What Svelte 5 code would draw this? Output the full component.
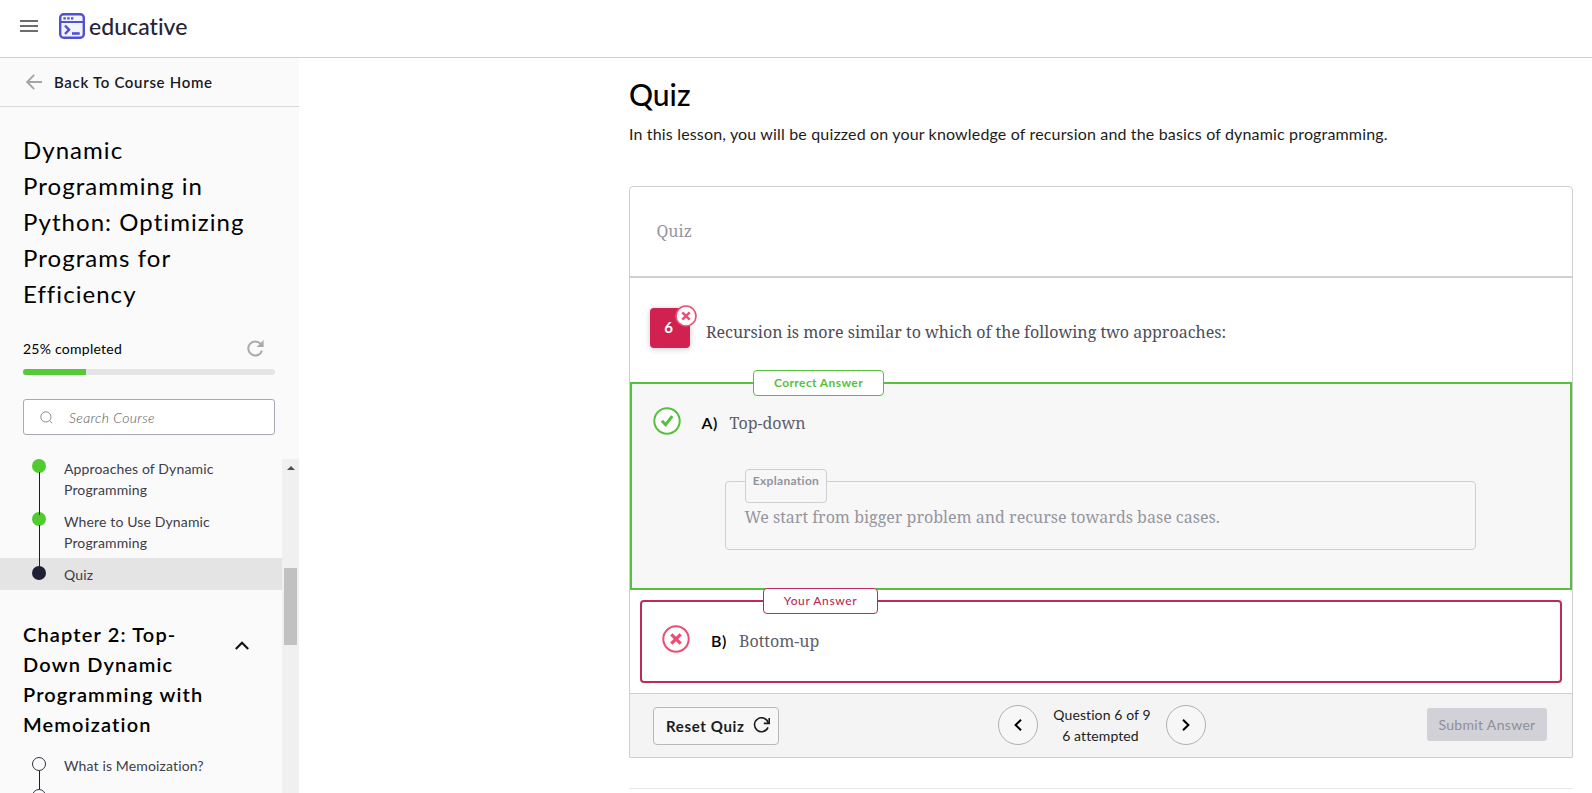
<script>
  const lessons = [
    { title: 'Approaches of Dynamic Programming', state: 'done' },
    { title: 'Where to Use Dynamic Programming', state: 'done' },
    { title: 'Quiz', state: 'current' },
  ];
  const nextLessons = [
    { title: 'What is Memoization?', state: 'todo' },
    { title: '', state: 'todo' },
  ];
  const progress = 25;
</script>

{#snippet lesson(item, last)}
  <li class="lesson {item.state}" class:last>
    <i class="dot"></i>
    <span>{item.title}</span>
  </li>
{/snippet}

{#snippet cross(size)}
  <svg width={size} height={size} viewBox="0 0 28 28" fill="none" stroke="#ea4f73">
    <circle cx="14" cy="14" r="12.7" fill="#fff" stroke-width="2" />
    <path d="M9.3 9.3l9.4 9.4M18.7 9.3l-9.4 9.4" stroke-width="3.2" />
  </svg>
{/snippet}

<header class="top">
  <svg class="burger" width="18" height="12" viewBox="0 0 18 12" fill="#6d6d6d">
    <path d="M0 0h18v2H0zM0 5h18v2H0zM0 10h18v2H0z" />
  </svg>
  <svg class="mark" width="26" height="26" viewBox="0 0 26 26" fill="none" stroke="#5050d2">
    <rect x="1.2" y="1.2" width="23.6" height="23.6" rx="3.5" stroke-width="2.4" fill="#f3f3ff" />
    <path d="M1 9h24" stroke-width="2" />
    <path d="M4.4 5.4h2.4M8.2 5.4h2.4M12 5.4h2.4" stroke-width="2.4" />
    <path d="M6 12.5l4 4.3-4 4.2" stroke-width="2.5" />
    <path d="M13 20.5h7.7" stroke-width="2.6" />
  </svg>
  <span class="brand">educative</span>
</header>

<div class="page">
  <aside>
    <div class="back">
      <svg width="16" height="16" viewBox="0 0 16 16" fill="none" stroke="#a6a6aa" stroke-width="1.9">
        <path d="M16 8H1.4M8.2 .8L1.2 8l7 7.2" />
      </svg>
      <span>Back To Course Home</span>
    </div>
    <h2>Dynamic Programming in Python: Optimizing Programs for Efficiency</h2>
    <div class="status">
      <span>{progress}% completed</span>
      <svg width="17" height="17" viewBox="0 0 17 17">
        <path d="M13.6 3.9A7 7 0 1 0 15 10.6" fill="none" stroke="#a9a9ae" stroke-width="2" />
        <path d="M16.6 0v7h-7z" fill="#a9a9ae" />
      </svg>
    </div>
    <div class="bar"><div style="width:{progress}%"></div></div>
    <div class="search">
      <svg width="13" height="13" viewBox="0 0 13 13" fill="none" stroke="#8b8b90">
        <circle cx="5.9" cy="5.9" r="5.1" />
        <path d="M9.5 9.5l2.7 2.7" />
      </svg>
      <span>Search Course</span>
    </div>
    <div class="scroller">
      <div class="list">
        <ul>
          {#each lessons as l, i}{@render lesson(l, i === lessons.length - 1)}{/each}
        </ul>
        <div class="chapter">
          <h3>Chapter 2: Top-Down Dynamic Programming with Memoization</h3>
          <svg width="14" height="9" viewBox="0 0 14 9" fill="none" stroke="#111" stroke-width="2.1">
            <path d="M.8 8L7 1.7 13.2 8" />
          </svg>
        </div>
        <ul>
          {#each nextLessons as l, i}{@render lesson(l, i === nextLessons.length - 1)}{/each}
        </ul>
      </div>
      <div class="track">
        <svg width="8" height="4" viewBox="0 0 8 4"><path d="M0 4l4-4 4 4z" fill="#505050" /></svg>
        <div class="thumb"></div>
      </div>
    </div>
  </aside>

  <main>
    <h1>Quiz</h1>
    <p class="intro">In this lesson, you will be quizzed on your knowledge of recursion and the basics of dynamic programming.</p>

    <section class="card">
      <div class="card-head">Quiz</div>
      <div class="question">
        <div class="number">6<div class="flag">{@render cross(22)}</div></div>
        <span>Recursion is more similar to which of the following two approaches:</span>
      </div>

      <div class="option right">
        <div class="tag">Correct Answer</div>
        <div class="choice">
          <svg width="28" height="28" viewBox="0 0 28 28" fill="none" stroke="#55c13c">
            <circle cx="14" cy="14" r="12.7" fill="#fff" stroke-width="2" />
            <path d="M8.8 13.8l3.8 4 6.6-8.6" stroke-width="3" />
          </svg>
          <b>A)</b><span>Top-down</span>
        </div>
        <div class="why">
          <div class="why-tag">Explanation</div>
          We start from bigger problem and recurse towards base cases.
        </div>
      </div>

      <div class="option wrong">
        <div class="tag">Your Answer</div>
        <div class="choice">{@render cross(28)}<b>B)</b><span>Bottom-up</span></div>
      </div>

      <footer>
        <button class="reset">
          <span>Reset Quiz</span>
          <svg width="17" height="17" viewBox="0 0 17 17" fill="none" stroke="#1d1d1f" stroke-width="1.6">
            <path d="M15 10.4A7 7 0 1 1 15.3 6" />
            <path d="M16.2 1v5.4h-5.4" />
          </svg>
        </button>
        <div class="pager">
          <button class="round" aria-label="Previous">
            <svg width="8" height="12" viewBox="0 0 8 12" fill="none" stroke="#000" stroke-width="2"><path d="M7 .8L1.6 6 7 11.2" /></svg>
          </button>
          <div class="count"><span>Question 6 of 9</span><span>6 attempted</span></div>
          <button class="round" aria-label="Next">
            <svg width="8" height="12" viewBox="0 0 8 12" fill="none" stroke="#000" stroke-width="2"><path d="M1 .8L6.4 6 1 11.2" /></svg>
          </button>
        </div>
        <button class="submit">Submit Answer</button>
      </footer>
    </section>
    <div class="rule"></div>
  </main>
</div>

<style>
  :global(body) { background: #fff; overflow: hidden; }
  :global(#app) { height: 793px; overflow: hidden; font-family: Lato, sans-serif; color: #000; }
  * { box-sizing: border-box; }
  h1, h2, h3, p, ul { margin: 0; padding: 0; font-weight: 400; list-style: none; }
  svg { display: block; flex: none; }
  button { font-family: inherit; padding: 0; margin: 0; }

  .top { height: 58px; display: flex; align-items: flex-start; padding: 13px 0 0 20px; border-bottom: 1px solid #cfcfcf; }
  .burger { margin-top: 7px; }
  .mark { margin-left: 21px; }
  .brand { margin-left: 4px; font-size: 23px; font-weight: 500; line-height: 26px; letter-spacing: 0.05px; font-variant-ligatures: none; color: #24243a; }

  .page { display: flex; height: 735px; }
  aside { width: 299px; flex: none; background: #fafafa; display: flex; flex-direction: column; }
  .back { height: 49px; flex: none; display: flex; align-items: center; gap: 12px; padding: 0 0 1px 26px; border-bottom: 1px solid #d8d8d8; font-size: 15px; font-weight: 600; letter-spacing: 0.68px; color: #1b1b1f; }
  h2 { margin: 25px 24px 0 23px; width: 245px; font-size: 24px; line-height: 36px; letter-spacing: 1.05px; }
  .status { height: 25px; margin: 24px 35px 0 23px; display: flex; justify-content: space-between; align-items: center; font-size: 14px; letter-spacing: 0.25px; }
  .bar { height: 6px; flex: none; margin: 8px 24px 0 23px; border-radius: 3px; background: #e4e4e4; overflow: hidden; }
  .bar div { height: 100%; background: #55ca36; }
  .search { height: 36px; flex: none; margin: 24px 24px 0 23px; border: 1px solid #a9a9b2; border-radius: 3px; background: #fff; display: flex; align-items: center; padding-left: 16px; gap: 16px; font-size: 14px; font-style: italic; font-weight: 300; letter-spacing: 0.35px; color: #55555a; }

  .scroller { flex: 1; min-height: 0; margin-top: 24px; display: flex; overflow: hidden; }
  .list { width: 282px; flex: none; margin-top: -6px; }
  .track { width: 17px; background: #f0f0f0; display: flex; flex-direction: column; align-items: center; padding-top: 7px; }
  .thumb { width: 13px; height: 77px; margin-top: 98px; background: #c1c1c1; margin-left: -1px; }

  .lesson { position: relative; display: flex; align-items: flex-start; padding: 5px 0 5.5px 32px; gap: 18px; font-size: 14px; line-height: 21px; letter-spacing: 0.14px; color: #3d3d49; }
  .lesson span { width: 170px; }
  .dot { width: 14px; height: 14px; flex: none; border-radius: 50%; background: #52cb30; margin-top: 1px; }
  .lesson:not(.last)::after { content: ''; position: absolute; z-index: 1; left: 39px; top: 19px; bottom: -9px; width: 1px; background: #1c1c2c; }
  .current { height: 32px; background: #e4e4e4; padding-top: 6px; }
  .current .dot { margin-top: 2px; background: #1f1f36; }
  .todo { height: 32px; }
  .todo .dot { background: transparent; border: 1px solid #33333f; margin-top: 2px; }
  .todo:not(.last)::after { top: 21px; bottom: -7px; }
  .chapter { margin: 29px 0 11px 23px; display: flex; }
  h3 { width: 212px; font-size: 20px; font-weight: 600; line-height: 30px; letter-spacing: 1.15px; padding-right: 20px; }
  .chapter svg { margin-top: 22px; }

  main { flex: 1; padding: 16px 19px 0 330px; }
  h1 { font-size: 30px; font-weight: 500; line-height: 40px; }
  .intro { margin-top: 8px; font-size: 16px; line-height: 24px; letter-spacing: 0.162px; color: #1c1c20; white-space: nowrap; }
  .card { margin-top: 40px; height: 572px; border: 1px solid #cfcfd1; border-radius: 4px 4px 0 0; font-family: 'Noto Serif', serif; font-size: 16px; line-height: 24px; color: #4d4d59; }
  .card-head { height: 91px; border-bottom: 2px solid #d0d0d2; display: flex; align-items: center; padding: 0 0 2px 26.5px; color: #95959f; }
  .question { height: 104px; display: flex; padding: 30px 0 0 20px; gap: 16px; }
  .question > span { margin-top: 12px; }
  .number { position: relative; width: 40px; height: 40px; border-radius: 4px; background: #d12150; color: #fff; font: 700 15px/38px Lato, sans-serif; text-align: center; padding-right: 3px; box-shadow: 0 1px 6px rgba(0, 0, 0, 0.2); }
  .flag { position: absolute; left: 25px; top: -3px; }

  .option { position: relative; border: 2px solid; }
  .tag { position: absolute; top: -14px; height: 26px; border: 1px solid; border-radius: 4px; background: #fff; padding-bottom: 1px; display: flex; align-items: center; justify-content: center; font: 700 12px Lato, sans-serif; letter-spacing: 0.4px; }
  .choice { display: flex; height: 28px; }
  .choice b { width: 28px; margin-left: 21px; font: 600 16px/24px Lato, sans-serif; color: #000; padding-top: 4px; letter-spacing: 0.5px; }
  .choice span { padding-top: 4px; color: #5d5d69; }
  .right { height: 208px; border-color: #55c13c; background: #f7f7f7; padding: 23px 0 0 20.5px; }
  .right .tag { left: 121px; width: 131px; color: #55c13c; }
  .wrong { margin: 10px; height: 83px; border-color: #bb2c57; border-radius: 4px; padding: 23px 0 0 20px; }
  .wrong .tag { left: 121px; width: 115px; color: #bb2c57; font-weight: 500; letter-spacing: 0.6px; }
  .why { position: relative; margin: 46px 94px 0 72.5px; height: 69px; border: 1px solid #cfcfd1; border-radius: 4px; padding: 23px 0 0 18.5px; color: #95959f; }
  .why-tag { position: absolute; left: 19px; top: -13px; width: 82px; height: 34px; border: 1px solid #cfcfd1; border-radius: 4px; background: #f7f7f7; text-align: center; font: 700 12px/22px Lato, sans-serif; letter-spacing: 0.3px; color: #94949d; }

  footer { height: 64px; display: grid; grid-template-columns: 345px 1fr auto; align-items: center; padding: 0 25px 2px 23px; background: #f4f4f4; border-top: 1px solid #cfcfd1; font-family: Lato, sans-serif; color: #1c1c20; }
  .reset { width: 126px; height: 38px; position: relative; top: 1px; display: flex; align-items: center; gap: 8px; padding-left: 12px; border: 1px solid #b8b8bb; border-radius: 4px; background: #f7f7f7; font-size: 15px; font-weight: 700; letter-spacing: 0.65px; color: #1c1c20; }
  .pager { display: flex; align-items: center; }
  .round { width: 40px; height: 40px; display: grid; place-items: center; border: 1px solid #b1b1b5; border-radius: 50%; background: #f7f7f7; }
  .count { width: 128px; display: flex; flex-direction: column; align-items: center; font-size: 14px; line-height: 21px; letter-spacing: 0.1px; }
  .count span:last-child { margin-left: -3px; }
  .submit { width: 120px; height: 33px; border: 0; border-radius: 3px; background: #d1d1d7; color: #8f8f99; font-size: 14px; letter-spacing: 0.33px; }
  .rule { height: 1px; margin-top: 30px; background: #e8e8e8; }
</style>
